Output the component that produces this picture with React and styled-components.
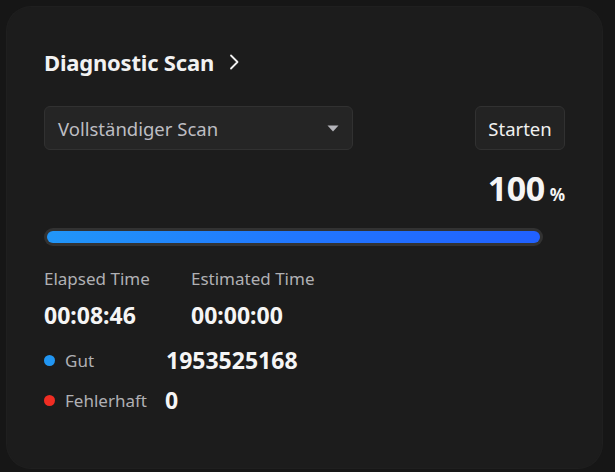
import styled, { createGlobalStyle } from 'styled-components';

const GlobalStyle = createGlobalStyle`
  html, body {
    margin: 0;
    padding: 0;
    background: #161616;
    font-family: "Noto Sans", "Open Sans", sans-serif;
  }
  * { box-sizing: border-box; }
`;

const Page = styled.div`
  width: 615px;
  height: 472px;
  padding: 7px 13px 4px 7px;
  overflow: hidden;
`;

const Card = styled.section`
  display: flex;
  flex-direction: column;
  height: 100%;
  padding: 40px 37px 0 37px;
  background: #1c1c1c;
  border-radius: 24px;
  box-shadow: 0 0 0 1px #1f1f1f;
`;

const Title = styled.h2`
  display: flex;
  align-items: center;
  gap: 15px;
  margin: 0;
  height: 30px;
  line-height: 30px;
  font-size: 22px;
  font-weight: 700;
  color: #f2f2f2;
  letter-spacing: -0.2px;
`;

const Controls = styled.div`
  display: flex;
  justify-content: space-between;
  align-items: center;
  margin-top: 29px;
`;

const Select = styled.div`
  display: flex;
  align-items: center;
  justify-content: space-between;
  width: 309px;
  height: 44px;
  padding: 0 13px 0 13px;
  background: #252525;
  border: 1px solid #313131;
  border-radius: 6px;
  color: #bdbdc2;
  font-size: 18.5px;
`;

const Button = styled.button`
  height: 44px;
  width: 90px;
  padding: 0;
  background: #232323;
  border: 1px solid #313131;
  border-radius: 6px;
  color: #f0f0f0;
  font-family: inherit;
  font-size: 18.5px;
`;

const Percent = styled.div`
  display: flex;
  justify-content: flex-end;
  align-items: baseline;
  gap: 5px;
  height: 34px;
  margin-top: 21px;
  color: #f5f5f5;
  font-weight: 700;
  line-height: 34px;
`;

const Big = styled.span`
  font-size: 34px;
  letter-spacing: -0.5px;
`;

const Small = styled.span`
  font-size: 17px;
`;

const Track = styled.div`
  width: 499px;
  height: 18px;
  margin-top: 23px;
  padding: 3px;
  background: #323232;
  border-radius: 9px;
`;

const Fill = styled.div`
  height: 100%;
  border-radius: 6px;
  background: linear-gradient(90deg, #2196f8 0%, #2177ff 50%, #2161ff 100%);
`;

const Times = styled.div`
  display: grid;
  grid-template-columns: 147px auto;
  margin-top: 22px;
  row-gap: 10px;
`;

const Label = styled.div`
  font-size: 17px;
  color: #b0b0b4;
  line-height: 22px;
`;

const Value = styled.div`
  font-size: 23px;
  font-weight: 700;
  color: #f5f5f5;
  line-height: 30px;
`;

const Legend = styled.div`
  display: grid;
  grid-template-columns: 122px auto;
  grid-auto-rows: 40px;
  align-items: center;
  margin-top: 10px;
`;

const Key = styled.div`
  display: flex;
  align-items: center;
  gap: 10px;
  font-size: 17px;
  color: #b0b0b4;
`;

const Dot = styled.span`
  width: 11px;
  height: 11px;
  border-radius: 50%;
  background: ${(p) => p.color};
`;

const Count = styled.div`
  font-size: 23px;
  font-weight: 700;
  color: #f5f5f5;
  margin-left: ${(p) => p.shift || 0}px;
`;

const App = () => {
  const progress = 100;

  return (
    <Page>
      <GlobalStyle />
      <Card>
        <Title>
          Diagnostic Scan
          <svg width="10" height="16" viewBox="0 0 10 16" fill="none">
            <path d="M2 1.5L8.5 8L2 14.5" stroke="#f0f0f0" strokeWidth="1.8" strokeLinecap="round" strokeLinejoin="round" />
          </svg>
        </Title>
        <Controls>
          <Select>
            <span>Vollständiger Scan</span>
            <svg width="12" height="7" viewBox="0 0 12 7">
              <path d="M0.5 0.5H11.5L6 6.5Z" fill="#b4b4ba" />
            </svg>
          </Select>
          <Button type="button">Starten</Button>
        </Controls>
        <Percent>
          <Big>{progress}</Big>
          <Small>%</Small>
        </Percent>
        <Track>
          <Fill style={{ width: `${progress}%` }} />
        </Track>
        <Times>
          <Label>Elapsed Time</Label>
          <Label>Estimated Time</Label>
          <Value>00:08:46</Value>
          <Value>00:00:00</Value>
        </Times>
        <Legend>
          <Key><Dot color="#2196f3" />Gut</Key>
          <Count>1953525168</Count>
          <Key><Dot color="#f02d23" />Fehlerhaft</Key>
          <Count shift={-1}>0</Count>
        </Legend>
      </Card>
    </Page>
  );
};

export default App;
